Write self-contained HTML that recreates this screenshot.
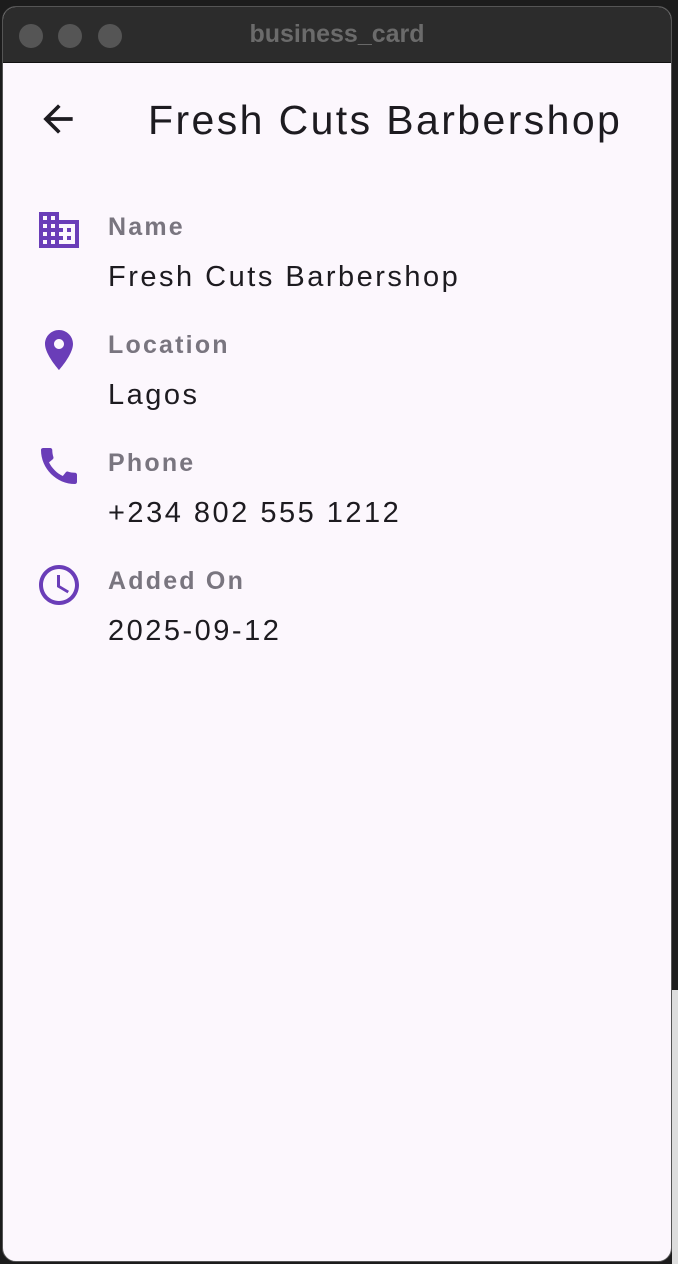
<!DOCTYPE html>
<html><head><style>
*{margin:0;padding:0;box-sizing:border-box}
body{width:678px;height:1264px;overflow:hidden;background:#1c1c1c;position:relative;font-family:"Liberation Sans",sans-serif}
.rs{position:absolute;left:672px;top:990px;width:6px;height:274px;background:#ddd}
.win{position:absolute;left:2px;top:6px;width:670px;height:1256px;border-radius:14px;overflow:hidden;background:#fcf7fd;border:1px solid #555}
.tb{height:56px;background:#2c2c2c;position:relative;border-bottom:1px solid #111}
.dot{position:absolute;top:17px;width:24px;height:24px;border-radius:50%;background:#555}
.tt{position:absolute;left:0;right:0;top:13px;text-align:center;color:#6b6b6b;font-weight:bold;font-size:25px}
.title{position:absolute;left:145px;top:90px;font-size:41px;letter-spacing:2.4px;color:#1d1b20}
.row{position:absolute;left:0;width:100%}
.row svg{position:absolute;left:32px}
.lab{position:absolute;left:105px;font-size:25px;font-weight:bold;color:#79757f;letter-spacing:2.2px}
.val{position:absolute;left:105px;font-size:29px;color:#1d1b20;letter-spacing:2.5px}
</style></head><body>
<div class="rs"></div>
<div class="win">
<div class="tb"><div class="dot" style="left:16px"></div><div class="dot" style="left:55px"></div><div class="dot" style="left:95px"></div><div class="tt">business_card</div></div>
<svg style="position:absolute;left:33px;top:90px" width="44" height="44" viewBox="0 0 24 24"><path d="M20 11H7.83l5.59-5.59L12 4l-8 8 8 8 1.41-1.41L7.83 13H20v-2z" fill="#1d1b20"/></svg>
<div class="title">Fresh Cuts Barbershop</div>
<div class="row" style="top:200px">
<svg style="top:-1px" width="48" height="48" viewBox="0 0 24 24"><path fill="#6a3db8" d="M12 7V3H2v18h20V7H10zM6 19H4v-2h2v2zm0-4H4v-2h2v2zm0-4H4V9h2v2zm0-4H4V5h2v2zm4 12H8v-2h2v2zm0-4H8v-2h2v2zm0-4H8V9h2v2zm0-4H8V5h2v2zm10 12h-8v-2h2v-2h-2v-2h2v-2h-2V9h8v10zm-2-8h-2v2h2v-2zm0 4h-2v2h2v-2z"/></svg>
<div class="lab" style="top:6px">Name</div><div class="val" style="top:54px">Fresh Cuts Barbershop</div></div>
<div class="row" style="top:318px">
<svg style="top:1px" width="48" height="48" viewBox="0 0 24 24"><path fill="#6a3db8" d="M12 2C8.13 2 5 5.13 5 9c0 5.25 7 13 7 13s7-7.75 7-13c0-3.87-3.130-7-7-7zm0 9.5c-1.38 0-2.5-1.12-2.5-2.5s1.12-2.5 2.5-2.5 2.5 1.12 2.5 2.5-1.120 2.5-2.5 2.5z"/></svg>
<div class="lab" style="top:6px">Location</div><div class="val" style="top:54px">Lagos</div></div>
<div class="row" style="top:436px">
<svg style="top:-1px" width="48" height="48" viewBox="0 0 24 24"><path fill="#6a3db8" d="M20.01 15.38c-1.23 0-2.42-.2-3.53-.56-.35-.12-.74-.03-1.01.24l-1.57 1.97c-2.83-1.35-5.48-3.9-6.89-6.830l1.95-1.66c.27-.28.35-.67.24-1.02-.37-1.11-.56-2.3-.56-3.53 0-.54-.45-.99-.99-.99H4.19C3.65 3 3 3.24 3 3.99 3 13.28 10.73 21 20.01 21c.71 0 .99-.63.99-1.18v-3.45c0-.54-.45-.99-.99-.99z"/></svg>
<div class="lab" style="top:6px">Phone</div><div class="val" style="top:54px">+234 802 555 1212</div></div>
<div class="row" style="top:554px">
<svg style="top:0px" width="48" height="48" viewBox="0 0 24 24"><path fill="#6a3db8" d="M11.99 2C6.470 2 2 6.48 2 12s4.47 10 9.99 10C17.52 22 22 17.52 22 12S17.52 2 11.99 2zM12 20c-4.42 0-8-3.58-8-8s3.58-8 8-8 8 3.58 8 8-3.58 8-8 8zm.5-13H11v6l5.25 3.15.75-1.23-4.5-2.67z"/></svg>
<div class="lab" style="top:6px">Added On</div><div class="val" style="top:54px">2025-09-12</div></div>
</div>
</body></html>
